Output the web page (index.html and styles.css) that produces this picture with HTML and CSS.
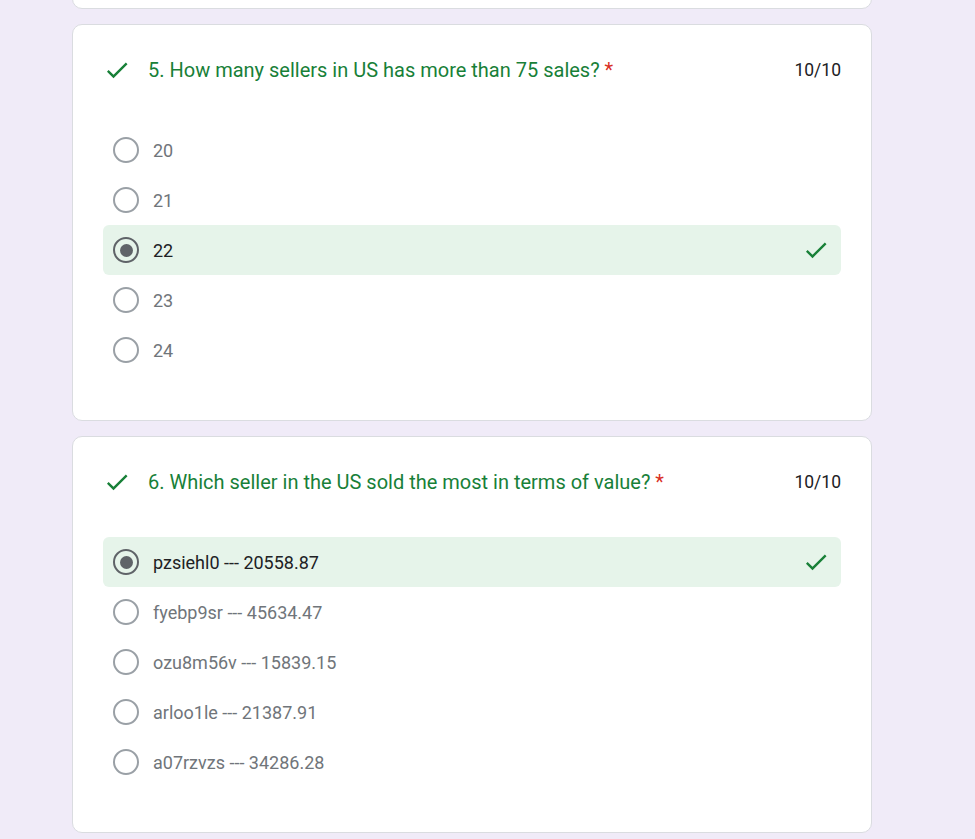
FILE: index.html
```html
<!DOCTYPE html>
<html>
<head>
<meta charset="utf-8">
<link rel="stylesheet" href="styles.css">
</head>
<body>
<div class="page">
  <div class="card card-top"></div>

  <div class="card">
    <div class="q-head">
      <svg class="q-check" viewBox="0 0 24 24"><path d="M9 16.17L4.83 12l-1.42 1.41L9 19 21 7l-1.41-1.41z"/></svg>
      <div class="q-title">5. How many sellers in US has more than 75 sales? <span class="req">*</span></div>
      <div class="q-score">10/10</div>
    </div>
    <div class="options">
      <div class="opt"><span class="radio"></span><span class="label">20</span></div>
      <div class="opt"><span class="radio"></span><span class="label">21</span></div>
      <div class="opt opt-correct"><span class="radio radio-on"></span><span class="label">22</span>
        <svg class="opt-check" viewBox="0 0 24 24"><path d="M9 16.17L4.83 12l-1.42 1.41L9 19 21 7l-1.41-1.41z"/></svg></div>
      <div class="opt"><span class="radio"></span><span class="label">23</span></div>
      <div class="opt"><span class="radio"></span><span class="label">24</span></div>
    </div>
  </div>

  <div class="card">
    <div class="q-head">
      <svg class="q-check" viewBox="0 0 24 24"><path d="M9 16.17L4.83 12l-1.42 1.41L9 19 21 7l-1.41-1.41z"/></svg>
      <div class="q-title">6. Which seller in the US sold the most in terms of value? <span class="req">*</span></div>
      <div class="q-score">10/10</div>
    </div>
    <div class="options">
      <div class="opt opt-correct"><span class="radio radio-on"></span><span class="label">pzsiehl0 --- 20558.87</span>
        <svg class="opt-check" viewBox="0 0 24 24"><path d="M9 16.17L4.83 12l-1.42 1.41L9 19 21 7l-1.41-1.41z"/></svg></div>
      <div class="opt"><span class="radio"></span><span class="label">fyebp9sr --- 45634.47</span></div>
      <div class="opt"><span class="radio"></span><span class="label">ozu8m56v --- 15839.15</span></div>
      <div class="opt"><span class="radio"></span><span class="label">arloo1le --- 21387.91</span></div>
      <div class="opt"><span class="radio"></span><span class="label">a07rzvzs --- 34286.28</span></div>
    </div>
  </div>
</div>
</body>
</html>
```

FILE: styles.css
```css
* { box-sizing: border-box; }
html, body {
  margin: 0;
  padding: 0;
  background: #f0ebf8;
  font-family: Roboto, "Liberation Sans", Arial, sans-serif;
  overflow: hidden;
}
.page {
  width: 800px;
  margin-left: 72px;
  margin-top: -40px;
  display: flex;
  flex-direction: column;
  gap: 15px;
}
.card {
  background: #fff;
  border: 1px solid #dadce0;
  border-radius: 10px;
  padding: 33px 30px 45px 30px;
}
.card-top {
  height: 49px;
  padding: 0;
}
.q-head {
  display: flex;
  align-items: center;
  height: 24px;
}
.q-check {
  width: 28px;
  height: 28px;
  fill: #188038;
  flex: none;
}
.q-title {
  margin-left: 17px;
  flex: 1;
  font-size: 20px;
  color: #188038;
}
.req { color: #d93025; }
.q-score {
  font-size: 17.5px;
  color: #202124;
}
.options {
  margin-top: 43px;
  display: flex;
  flex-direction: column;
}
.opt {
  height: 50px;
  display: flex;
  align-items: center;
  padding-left: 10px;
  padding-right: 11px;
  border-radius: 6px;
}
.opt-correct {
  background: #e6f4ea;
}
.radio {
  width: 26px;
  height: 26px;
  border: 2.5px solid #9aa0a6;
  border-radius: 50%;
  flex: none;
  display: flex;
  align-items: center;
  justify-content: center;
}
.radio-on {
  border-color: #5f6368;
}
.radio-on::after {
  content: "";
  width: 13px;
  height: 13px;
  border-radius: 50%;
  background: #5f6368;
}
.label {
  margin-left: 14px;
  flex: 1;
  font-size: 18px;
  color: #70757a;
}
.opt-correct .label { color: #202124; }
.opt-check {
  width: 28px;
  height: 28px;
  fill: #188038;
  flex: none;
}
```
